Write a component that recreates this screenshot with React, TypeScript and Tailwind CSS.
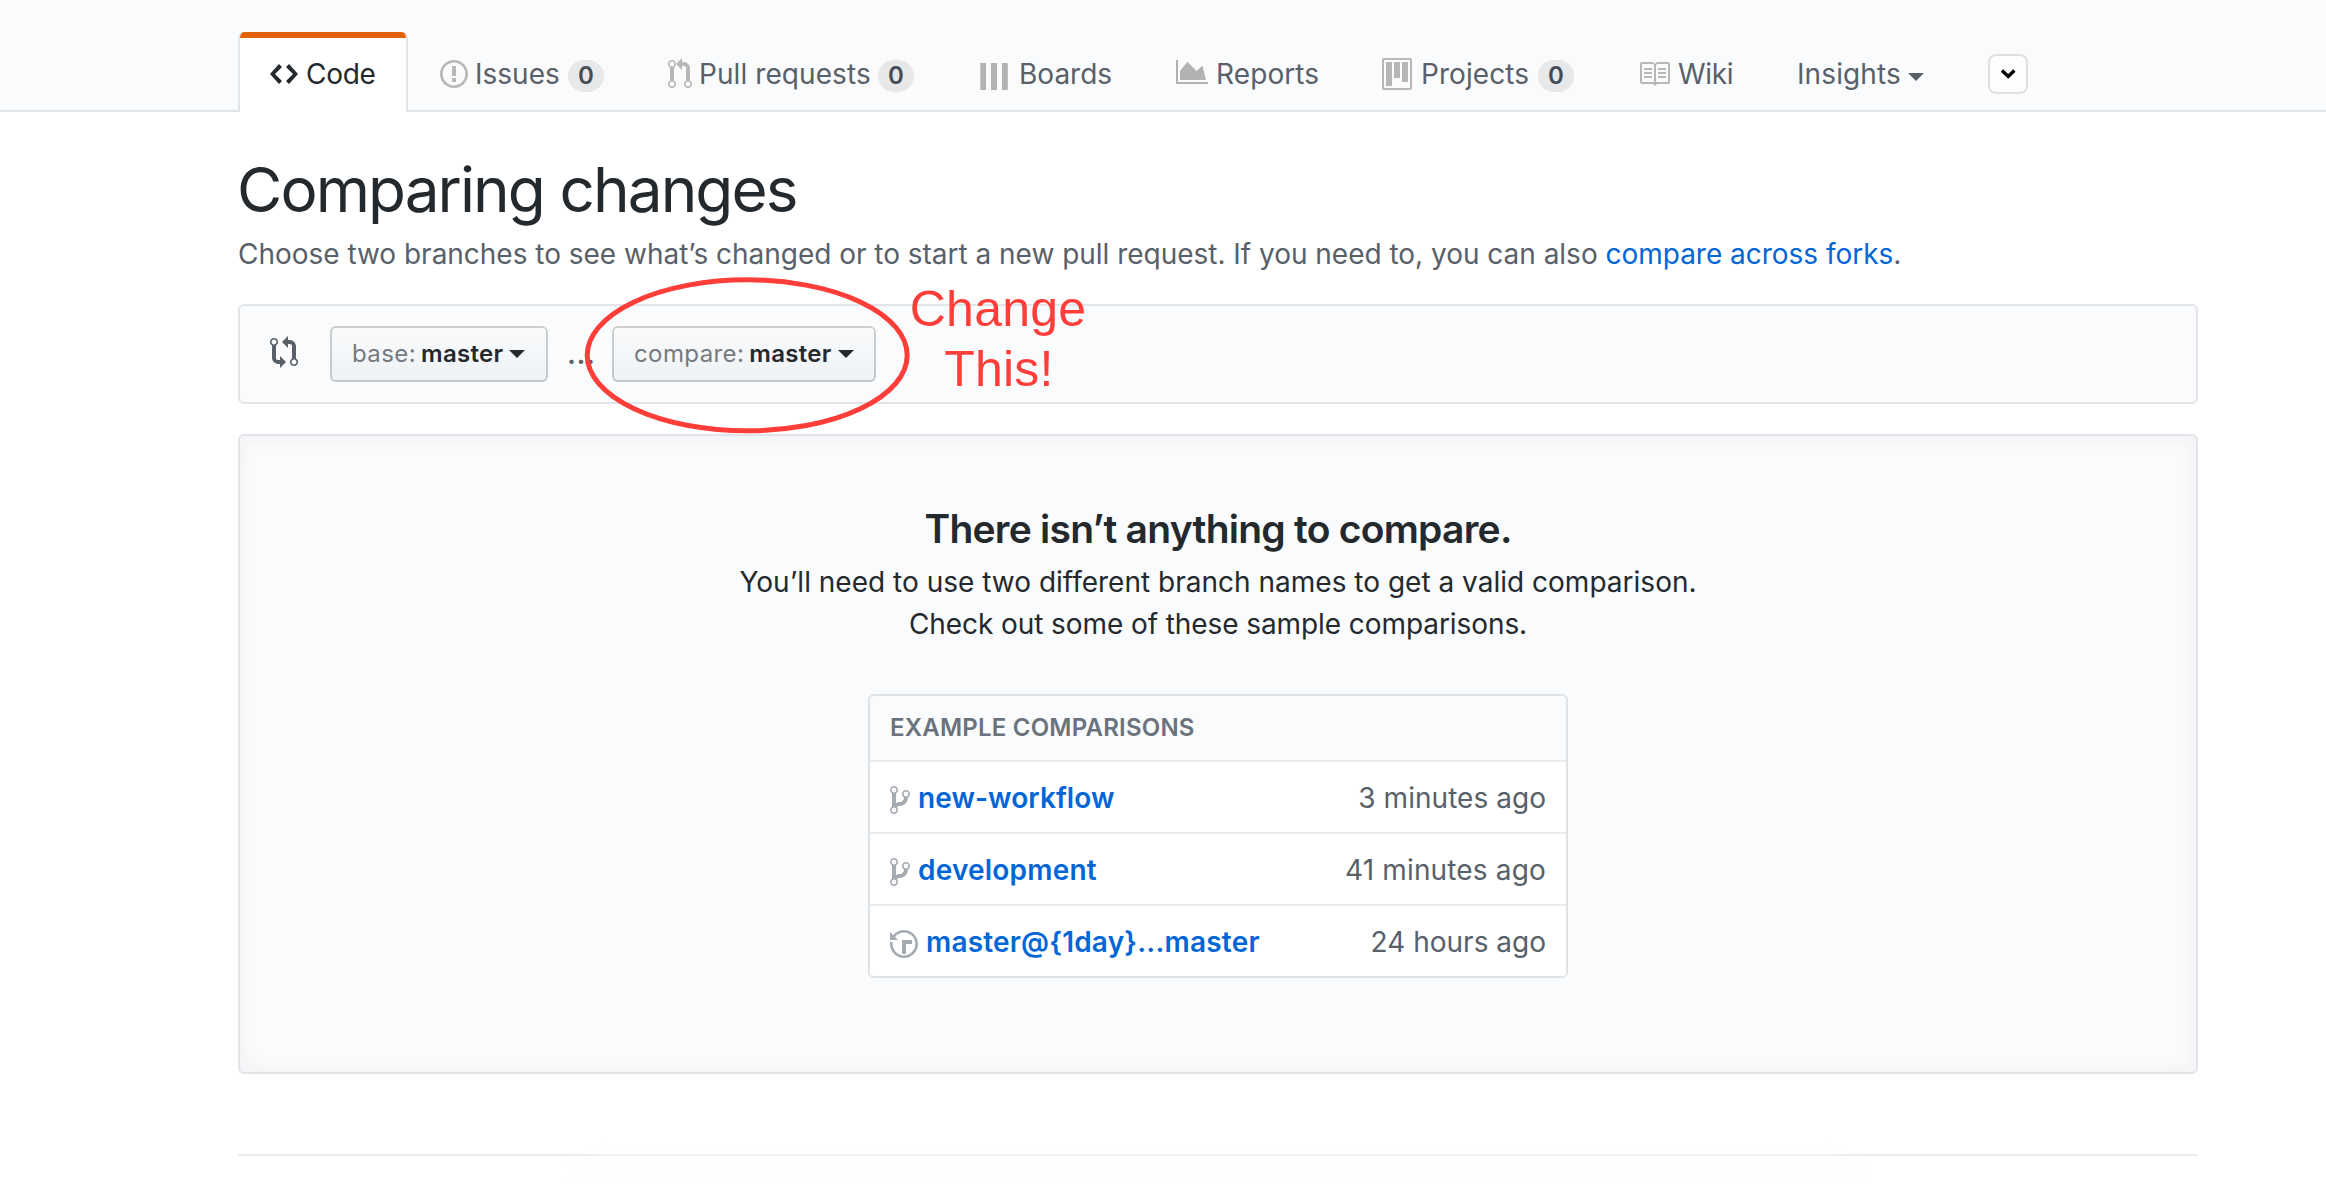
import type { ReactNode } from "react";

const CODE =
  "M9.5 3L8 4.5 11.5 8 8 11.5 9.5 13 14 8 9.5 3zm-5 0L0 8l4.5 5L6 11.5 2.5 8 6 4.5 4.5 3z";
const ISSUE =
  "M7 2.3c3.14 0 5.7 2.56 5.7 5.7s-2.56 5.7-5.7 5.7A5.71 5.71 0 0 1 1.3 8c0-3.14 2.56-5.7 5.7-5.7zM7 1C3.14 1 0 4.14 0 8s3.14 7 7 7 7-3.14 7-7-3.14-7-7-7zm1 3H6v5h2V4zm0 6H6v2h2v-2z";
const PULL =
  "M11 11.28V5c-.03-.78-.34-1.47-.94-2.06C9.46 2.35 8.78 2.03 8 2H7V0L4 3l3 3V4h1c.27.02.48.11.69.31.21.2.3.42.31.69v6.28A1.993 1.993 0 0 0 10 15a1.993 1.993 0 0 0 1-3.72zm-1 2.92c-.66 0-1.2-.55-1.2-1.2 0-.65.55-1.2 1.2-1.2.65 0 1.2.55 1.2 1.2 0 .65-.55 1.2-1.2 1.2zM4 3c0-1.11-.89-2-2-2a1.993 1.993 0 0 0-1 3.72v6.56A1.993 1.993 0 0 0 2 15a1.993 1.993 0 0 0 1-3.72V4.72c.59-.34 1-.98 1-1.72zm-.8 10c0 .66-.55 1.2-1.2 1.2-.65 0-1.2-.55-1.2-1.2 0-.65.55-1.2 1.2-1.2.65 0 1.2.55 1.2 1.2zM2 4.2C1.34 4.2.8 3.65.8 3c0-.65.55-1.2 1.2-1.2.65 0 1.2.55 1.2 1.2 0 .65-.55 1.2-1.2 1.2z";
const PROJECT =
  "M10 12h3V2h-3v10zm-4-2h3V2H6v8zm-4 4h3V2H2v12zm-1 1h13V1H1v14zM14 0H1a1 1 0 0 0-1 1v14a1 1 0 0 0 1 1h13a1 1 0 0 0 1-1V1a1 1 0 0 0-1-1z";
const BOOK =
  "M3 5h4v1H3V5zm0 3h4V7H3v1zm0 2h4V9H3v1zm11-5h-4v1h4V5zm0 2h-4v1h4V7zm0 2h-4v1h4V9zm2-6v9c0 .55-.45 1-1 1H9.5l-1 1-1-1H2c-.55 0-1-.45-1-1V3c0-.55.45-1 1-1h5.5l1 1 1-1H15c.55 0 1 .45 1 1zm-8 .5L7.5 3H2v9h6V3.5zm7-.5H9.5l-.5.5V12h6V3z";
const COMPARE =
  "M5 12H4c-.27-.02-.48-.11-.69-.31-.21-.2-.3-.42-.31-.69V4.72A1.993 1.993 0 0 0 2 1a1.993 1.993 0 0 0-1 3.72V11c.03.78.34 1.47.94 2.06.6.59 1.28.91 2.06.94h1v2l3-3-3-3v2zM2 1.8c.66 0 1.2.55 1.2 1.2 0 .65-.55 1.2-1.2 1.2C1.35 4.2.8 3.65.8 3c0-.65.55-1.2 1.2-1.2zm11 9.48V5c-.03-.78-.34-1.47-.94-2.06-.6-.59-1.28-.91-2.06-.94H9V0L6 3l3 3V4h1c.27.02.48.11.69.31.21.2.3.42.31.69v6.28A1.993 1.993 0 0 0 12 15a1.993 1.993 0 0 0 1-3.72zm-1 2.92c-.66 0-1.2-.55-1.2-1.2 0-.65.55-1.2 1.2-1.2.65 0 1.2.55 1.2 1.2 0 .65-.55 1.2-1.2 1.2z";
const BRANCH =
  "M10 5c0-1.11-.89-2-2-2a1.993 1.993 0 0 0-1 3.72v.3c-.02.52-.23.98-.63 1.38-.4.4-.86.61-1.38.63-.83.02-1.48.16-2 .45V4.72a1.993 1.993 0 0 0-1-3.72C.88 1 0 1.89 0 3a2 2 0 0 0 1 1.72v6.56c-.59.35-1 .99-1 1.72 0 1.11.89 2 2 2 1.11 0 2-.89 2-2 0-.53-.2-1-.53-1.36.09-.06.48-.41.59-.47.25-.11.56-.17.94-.17 1.05-.05 1.95-.45 2.75-1.25S8.95 7.77 9 6.73h-.02C9.59 6.37 10 5.73 10 5zM2 1.8c.66 0 1.2.55 1.2 1.2 0 .65-.55 1.2-1.2 1.2C1.35 4.2.8 3.65.8 3c0-.65.55-1.2 1.2-1.2zm0 12.41c-.66 0-1.2-.55-1.2-1.2 0-.65.55-1.2 1.2-1.2.65 0 1.2.55 1.2 1.2 0 .65-.55 1.2-1.2 1.2zm6-8c-.66 0-1.2-.55-1.2-1.2 0-.65.55-1.2 1.2-1.2.65 0 1.2.55 1.2 1.2 0 .65-.55 1.2-1.2 1.2z";
const HISTORY =
  "M8 13H6V6h5v2H8v5zM7 1C4.81 1 2.87 2.02 1.59 3.59L0 2v4h4L2.5 4.5C3.55 3.17 5.17 2.3 7 2.3c3.14 0 5.7 2.56 5.7 5.7s-2.56 5.7-5.7 5.7A5.71 5.71 0 0 1 1.3 8c0-.34.03-.67.09-1H.08C.03 7.33 0 7.66 0 8c0 3.86 3.14 7 7 7s7-3.14 7-7-3.14-7-7-7z";

/** Octicon drawn at double size on its 16-unit-high grid. */
function Icon({ d, w, className = "" }: { d: string; w: number; className?: string }) {
  return (
    <svg
      width={w * 2}
      height={32}
      viewBox={`0 0 ${w} 16`}
      fill="currentColor"
      fillRule="evenodd"
      className={`block shrink-0 ${className}`}
    >
      <path d={d} />
    </svg>
  );
}

function Caret({ className = "" }: { className?: string }) {
  return (
    <span
      className={`block h-0 w-0 shrink-0 border-x-8 border-t-8 border-x-transparent border-t-current ${className}`}
    />
  );
}

function Tab({ icon, children, className }: { icon?: ReactNode; children: ReactNode; className: string }) {
  return (
    <a
      className={`flex h-20 shrink-0 items-center border-t-[6px] border-b-2 border-transparent pl-8 text-[#586069] ${className}`}
    >
      {icon}
      {children}
    </a>
  );
}

function Counter({ className }: { className: string }) {
  return (
    <span
      className={`mt-1 flex h-8 w-9 items-center justify-center rounded-full bg-[#e7e8ea] pb-px text-[24px] leading-8 font-semibold tracking-normal text-[#444d56] ${className}`}
    >
      0
    </span>
  );
}

function BranchButton({ label, className }: { label: string; className: string }) {
  return (
    <button
      className={`flex h-14 items-center rounded-md border-2 border-[#1b1f23]/20 bg-[linear-gradient(180deg,#fafbfc,#eff3f6_90%)] bg-origin-border pl-5 text-[24px] text-[#24292e] ${className}`}
    >
      <span className="tracking-[0.4px] text-[#767a7e]">{label}</span>
      <span className="ml-[5px] font-semibold tracking-[0.3px]">master</span>
      <Caret className="ml-[6px]" />
    </button>
  );
}

function Row({
  icon,
  name,
  time,
  nameClass,
  timeClass,
}: {
  icon: ReactNode;
  name: string;
  time: string;
  nameClass: string;
  timeClass: string;
}) {
  return (
    <li className="flex h-[72px] items-center border-t-2 border-[#eaecef] bg-white px-5 pt-[2px] leading-[42px]">
      {icon}
      <a className={`ml-2 font-semibold text-[#0366d6] ${nameClass}`}>{name}</a>
      <span className={`ml-auto text-[#586069] ${timeClass}`}>{time}</span>
    </li>
  );
}

const muted = "text-[#b5b7b9]";

export default function App() {
  return (
    <div className="relative h-[1184px] w-[2326px] overflow-hidden bg-white font-['Inter',sans-serif] text-[28px] text-[#24292e]">
      <header className="h-28 border-b-2 border-[#e1e4e8] bg-[#fafbfc] pt-8 pl-[238px]">
        <nav className="flex whitespace-nowrap">
          <a className="relative flex h-20 w-[170px] shrink-0 items-center overflow-hidden rounded-t-md border-x-2 border-[#e1e4e8] bg-white pt-1 pl-[30px] tracking-[-0.3px]">
            <span className="absolute inset-x-[-2px] top-0 h-[6px] bg-[#e36209]" />
            <Icon d={CODE} w={14} />
            <span className="ml-2">Code</span>
          </a>
          <Tab icon={<Icon d={ISSUE} w={14} className={muted} />} className="w-[228px]">
            <span className="ml-[7px] w-[86px]">Issues</span>
            <Counter className="ml-[7px]" />
          </Tab>
          <Tab icon={<Icon d={PULL} w={12} className={muted} />} className="w-[312px] tracking-[0.08px]">
            <span className="ml-[7px] w-[172px]">Pull requests</span>
            <Counter className="ml-[7px]" />
          </Tab>
          <Tab
            icon={
              <svg width="28" height="32" viewBox="0 0 28 32" fill="#b1b3b2" className="shrink-0">
                <path d="M0.3 5h5.7v27h-5.7zM11 5h6v27h-6zM22 5h5.8v27h-5.8z" />
              </svg>
            }
            className="w-[196px]"
          >
            <span className="ml-[11px]">Boards</span>
          </Tab>
          <Tab
            icon={
              <svg width="32" height="32" viewBox="0 0 32 32" fill="#b1b3b2" className="shrink-0">
                <path d="M0 2h2v22h30v2H0z" />
                <path d="M4 13l7.5-9.2 9 9.2 6-5.2L30 22H4z" />
              </svg>
            }
            className="w-[206px] tracking-[0.1px]"
          >
            <span className="ml-[8px]">Reports</span>
          </Tab>
          <Tab icon={<Icon d={PROJECT} w={15} className={muted} />} className="w-[256px] tracking-[0.08px]">
            <span className="ml-[9px] w-[109px]">Projects</span>
            <Counter className="ml-2" />
          </Tab>
          <Tab icon={<Icon d={BOOK} w={16} className={muted} />} className="w-[159px] tracking-[-0.3px]">
            <span className="ml-2">Wiki</span>
          </Tab>
          <Tab className="w-[223px] tracking-[0.1px]">
            <span className="w-[105px]">Insights</span>
            <Caret className="mt-[6px] ml-[6px]" />
          </Tab>
          <button className="mt-[22px] flex size-10 items-center justify-center rounded-lg border-2 border-[#dfe0e1] bg-[#fcfdfd]">
            <svg width="16" height="12" viewBox="0 0 16 12" fill="none" stroke="#000" strokeWidth="3.4">
              <path d="M2 2.5l6.2 6 6.2-6" />
            </svg>
          </button>
        </nav>
      </header>

      <main className="ml-[238px] w-[1960px]">
        <h1 className="-ml-px pt-[40px] text-[62px] leading-[76px] tracking-[-1.91px]">Comparing changes</h1>
        <p className="mt-[5px] leading-[42px] tracking-[-0.02px] whitespace-nowrap text-[#586069]">
          Choose two branches to see what’s changed or to start a new pull request. If you need to, you can also{" "}
          <a className="text-[#0366d6]">compare across forks</a>.
        </p>

        <div className="mt-[29px] flex h-[100px] items-center rounded-md border-2 border-[#e1e4e8] bg-[#fafbfc] pl-[30px]">
          <Icon d={COMPARE} w={14} className="-mt-1 text-[#586069]" />
          <BranchButton label="base:" className="ml-8 w-[218px]" />
          <span className="w-16 pl-[19px] font-semibold tracking-[0.6px] text-[#586069]">...</span>
          <BranchButton label="compare:" className="w-[264px]" />
        </div>

        <section className="mt-[30px] flex h-[640px] flex-col items-center rounded-md border-2 border-[#e1e4e8] bg-[#fafbfc] pt-[63px] text-center shadow-[inset_0_0_20px_rgba(27,31,35,0.05)]">
          <h3 className="text-[39px] leading-[60px] font-semibold tracking-[-0.75px]">
            There isn’t anything to compare.
          </h3>
          <p className="mt-[2px] leading-[42px] tracking-[0.01px]">
            You’ll need to use two different branch names to get a valid comparison.
            <br />
            <span className="tracking-[-0.08px]">Check out some of these sample comparisons.</span>
          </p>
          <div className="mt-[49px] h-[284px] w-[700px] overflow-hidden rounded-md border-2 border-[#dfe2e5] text-left">
            <div className="h-16 px-5 text-[24px] leading-[63px] font-semibold tracking-[0.22px] text-[#6a737d]">
              EXAMPLE COMPARISONS
            </div>
            <ul>
              <Row
                icon={<Icon d={BRANCH} w={10} className="mt-1 text-[#a3aab1]" />}
                name="new-workflow"
                time="3 minutes ago"
                nameClass="tracking-[0.06px]"
                timeClass="tracking-[0.04px]"
              />
              <Row
                icon={<Icon d={BRANCH} w={10} className="mt-1 text-[#a3aab1]" />}
                name="development"
                time="41 minutes ago"
                nameClass="tracking-[0.2px]"
                timeClass="tracking-[0.16px]"
              />
              <Row
                icon={<Icon d={HISTORY} w={14} className="mt-1 text-[#a3aab1]" />}
                name="master@{1day}...master"
                time="24 hours ago"
                nameClass="tracking-[0.19px]"
                timeClass="tracking-[0px]"
              />
            </ul>
          </div>
        </section>

        <div className="mt-20 h-[2px] bg-[#eaecef]" />
        <div className="mt-[5px] ml-[345px] h-10 w-[1267px] bg-[linear-gradient(180deg,#fefefe,#fcfcfc)] blur-[8px]" />
      </main>

      {/* Hand-drawn annotation over the compare selector */}
      <svg
        width="330"
        height="160"
        viewBox="0 0 330 160"
        fill="none"
        className="pointer-events-none absolute top-[275px] left-[582px]"
      >
        <ellipse cx="165.2" cy="80.3" rx="160" ry="75.5" stroke="#ff3e39" strokeWidth="5" />
      </svg>
      <div className="pointer-events-none absolute top-[279px] left-[908px] w-[180px] text-center font-['Liberation_Sans',sans-serif] text-[50px] leading-[60px] tracking-[0.2px] text-[#ff3e39]">
        Change
        <br />
        <span className="ml-[2px]">This!</span>
      </div>
    </div>
  );
}
